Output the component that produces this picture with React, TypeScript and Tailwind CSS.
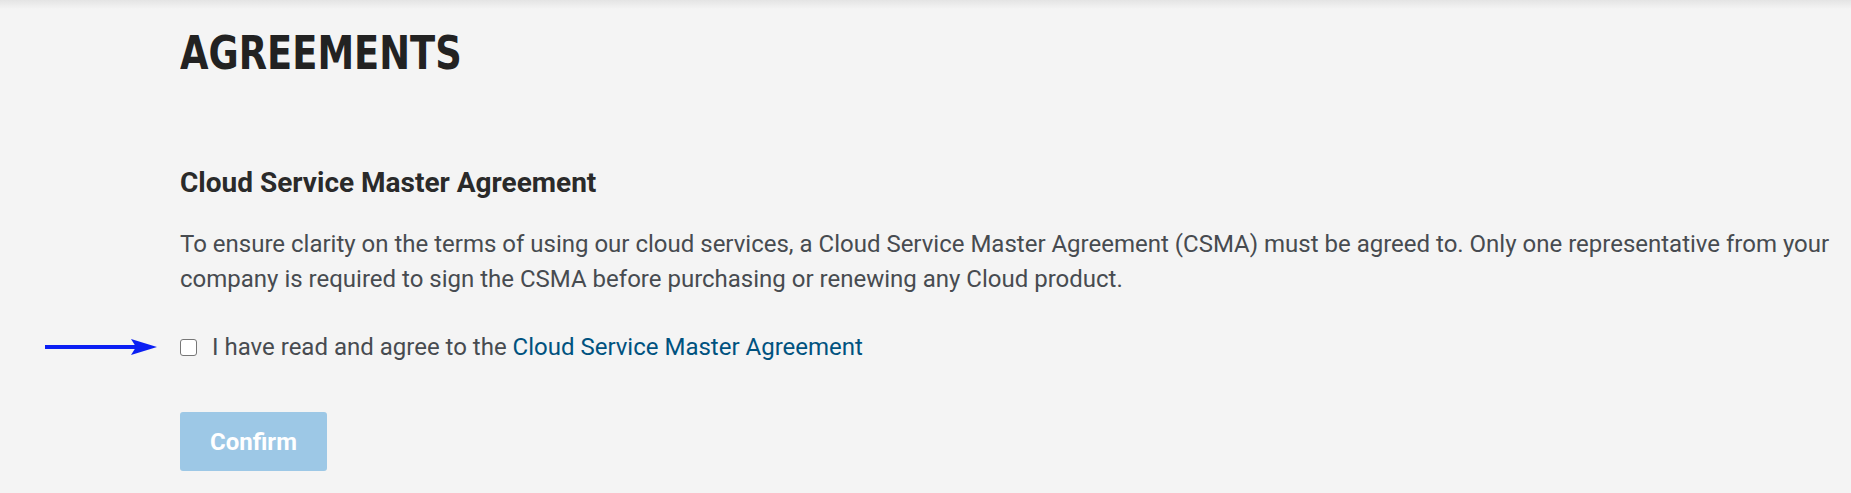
export default function App() {
    return (
        <div className="relative min-h-screen bg-[#f4f4f4] font-['Roboto',sans-serif]">
            <div className="absolute inset-x-0 top-0 h-[9px] bg-gradient-to-b from-[#e4e4e4] to-[#f4f4f4]" />
            <main className="pl-[180px] pr-[6px] pt-[30px] pb-[22px]">
                <h1 className="origin-left scale-x-[0.89] font-['DejaVu_Sans_Condensed','Roboto',sans-serif] text-[46px] leading-none font-bold text-[#222222]">
                    AGREEMENTS
                </h1>

                <section className="mt-[90px]">
                    <h2 className="text-[28px] leading-[34px] font-bold text-[#2a2a2a]">
                        Cloud Service Master Agreement
                    </h2>
                    <p className="mt-[27px] text-[24px] leading-[35px] text-[#474b50]">
                        To ensure clarity on the terms of using our cloud services, a Cloud Service Master Agreement (CSMA) must be agreed to. Only one representative from your company is required to sign the CSMA before purchasing or renewing any Cloud product.
                    </p>

                    <label className="relative mt-[33px] flex items-center text-[24px] leading-[34px] text-[#474b50]">
                        <span className="absolute right-full mr-[23px] top-1/2 -translate-y-1/2 flex items-center">
                            <svg width="112" height="18" viewBox="0 0 112 18">
                                <line x1="0" y1="9" x2="92" y2="9" stroke="#0b1ff3" strokeWidth="4" />
                                <path d="M86 1 L112 9 L86 17 L91 9 Z" fill="#0b1ff3" />
                            </svg>
                        </span>
                        <input
                            type="checkbox"
                            className="appearance-none w-[17px] h-[17px] border-[1.5px] border-[#767676] rounded-[3px] bg-white shrink-0"
                        />
                        <span className="ml-[15px]">
                            I have read and agree to the{" "}
                            <a href="#" className="text-[#00527f]">Cloud Service Master Agreement</a>
                        </span>
                    </label>

                    <button
                        type="button"
                        disabled
                        className="mt-[48px] h-[59px] w-[147px] rounded-[3px] bg-[#9dc8e6] text-[24px] font-bold text-white"
                    >
                        Confirm
                    </button>
                </section>
            </main>
        </div>
    );
}
